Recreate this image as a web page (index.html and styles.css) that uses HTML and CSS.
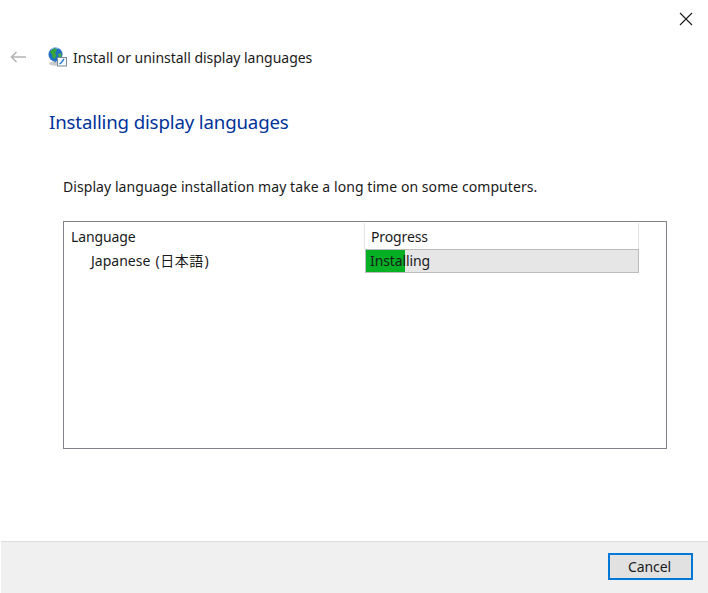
FILE: index.html
```html
<!DOCTYPE html>
<html lang="en">
<head>
<meta charset="utf-8">
<title>Install or uninstall display languages</title>
<link rel="stylesheet" href="styles.css">
</head>
<body>
<div class="window">
  <div class="titlebar">
    <svg class="close" width="14" height="14" viewBox="0 0 14 14"><path d="M1 1L13 13M13 1L1 13" stroke="#1a1a1a" stroke-width="1.1" fill="none"/></svg>
  </div>
  <div class="nav">
    <svg class="back" width="16" height="12" viewBox="0 0 16 12"><path d="M6.5 1L1.5 6L6.5 11M1.5 6H16" stroke="#b4b4b4" stroke-width="1.6" fill="none"/></svg>
    <svg class="globe" width="20" height="20" viewBox="0 0 20 20">
      <ellipse cx="8" cy="16.5" rx="6" ry="2.2" fill="#c9ccd0"/>
      <path d="M8 13v3" stroke="#a8acb0" stroke-width="2"/>
      <circle cx="8.5" cy="7.5" r="7" fill="#1f6fc4"/>
      <path d="M3 4.5c2-2.500 4-3 6-3l1 2-2 2 1.500 3-2 3.500-2-1.500-.5-3z" fill="#3aa53a"/>
      <path d="M11 7l3-1 .5 3-2.500 2z" fill="#48b048"/>
      <path d="M3.500 2.500a7 7 0 0 1 8-1" stroke="#9fc6ee" stroke-width="1" fill="none"/>
      <rect x="10.500" y="10.500" width="9" height="8.500" fill="#f4f7fb" stroke="#7d8a99"/>
      <path d="M12.500 17l1.500-1 3-4" stroke="#1e78c8" stroke-width="1.300" fill="none"/>
    </svg>
    <span class="nav-title">Install or uninstall display languages</span>
  </div>
  <main class="content">
    <h1 class="heading">Installing display languages</h1>
    <p class="note">Display language installation may take a long time on some computers.</p>
    <div class="list">
      <div class="list-head">
        <div class="col-lang">Language</div>
        <div class="col-progress">Progress</div>
      </div>
      <div class="list-row">
        <div class="cell-lang">Japanese (<span class="cjk">日本語</span>)</div>
        <div class="bar">
          <div class="bar-fill"></div>
          <span class="bar-label">Installing</span>
        </div>
      </div>
    </div>
  </main>
  <footer class="footer">
    <button class="cancel" type="button">Cancel</button>
  </footer>
</div>
</body>
</html>
```
FILE: styles.css
```css
* { box-sizing: border-box; }
html, body { margin: 0; padding: 0; background: #fff; }
body {
  font-family: "Noto Sans", "Noto Sans CJK JP", sans-serif;
  font-size: 14px;
  color: #1a1a1a;
}
.window {
  width: 708px;
  height: 593px;
  display: flex;
  flex-direction: column;
  overflow: hidden;
}
.titlebar {
  height: 41px;
  flex: none;
  display: flex;
  justify-content: flex-end;
  align-items: flex-start;
  padding: 12px 15px 0 0;
}
.close { display: block; }
.nav {
  height: 32px;
  flex: none;
  display: flex;
  align-items: center;
  padding-left: 10px;
}
.back { flex: none; margin-right: 21px; }
.globe { flex: none; margin-right: 6px; margin-top: -1px; }
.nav-title { font-size: 14px; letter-spacing: -0.02px; white-space: nowrap; }
.content {
  flex: 1;
  padding: 0 41px 0 63px;
}
.heading {
  margin: 35px 0 0 -14px;
  font-size: 18.67px;
  line-height: 28px;
  font-weight: 400;
  letter-spacing: -0.15px;
  color: #003399;
}
.note {
  margin: 41px 0 0;
  font-size: 14px;
  line-height: 20px;
  letter-spacing: 0.065px;
}
.list {
  margin-top: 24px;
  width: 604px;
  height: 228px;
  border: 1px solid #82828c;
  padding-top: 1px;
}
.list-head { display: flex; height: 26px; }
.col-lang {
  width: 301px;
  padding: 4px 0 0 7px;
  line-height: 20px;
  border-right: 1px solid #e5e5e5;
  letter-spacing: -0.1px;
}
.col-progress {
  width: 274px;
  padding: 4px 0 0 6px;
  line-height: 20px;
  border-right: 1px solid #e5e5e5;
  letter-spacing: -0.12px;
}
.list-row { display: flex; height: 24px; }
.cell-lang {
  width: 301px;
  padding: 1px 0 0 27px;
  line-height: 22px;
  letter-spacing: 0;
  word-spacing: 1.500px;
}
.cjk { letter-spacing: 0.6px; margin: 0 0.500px; }
.bar {
  position: relative;
  width: 274px;
  height: 24px;
  background: #e6e6e6;
  border: 1px solid #bcbcbc;
}
.bar-fill {
  width: 39px;
  height: 100%;
  background: #06b025;
}
.bar-label {
  position: absolute;
  left: 4px;
  top: 0;
  line-height: 22px;
  letter-spacing: -0.1px;
}
.footer {
  height: 52px;
  flex: none;
  margin-left: 1px;
  background: #f0f0f0;
  border-top: 1px solid #dfdfdf;
  display: flex;
  justify-content: flex-end;
  padding: 11px 15px 0 0;
}
.cancel {
  width: 85px;
  height: 27px;
  background: #e1e1e1;
  border: 2px solid #0078d7;
  padding: 0 2px 0 0;
  font: inherit;
  letter-spacing: -0.1px;
  color: #1a1a1a;
}
```
